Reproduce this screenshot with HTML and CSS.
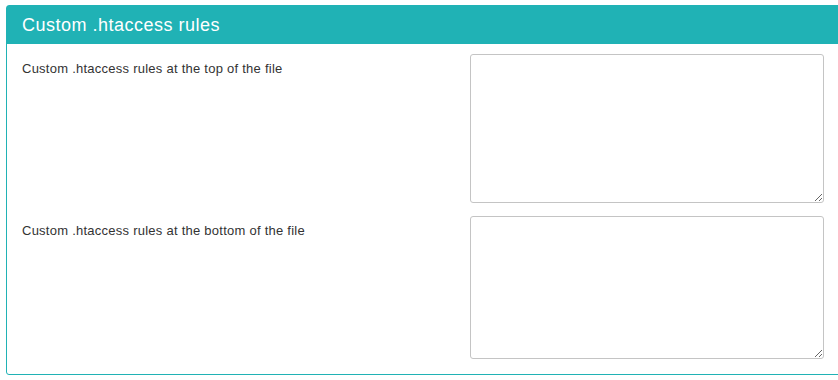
FILE: index.html
```html
<!DOCTYPE html>
<html lang="en">
<head>
    <meta charset="UTF-8">
    <title>Custom .htaccess rules</title>
    <link rel="stylesheet" href="styles.css">
</head>
<body>
    <!-- Panel -->
    <div class="panel">
        <div class="panel-heading">Custom .htaccess rules</div>
        <div class="panel-body">
            <div class="form-row">
                <label class="control-label" for="rules-top">Custom .htaccess rules at the top of the file</label>
                <textarea class="form-control top" id="rules-top"></textarea>
            </div>
            <div class="form-row">
                <label class="control-label" for="rules-bottom">Custom .htaccess rules at the bottom of the file</label>
                <textarea class="form-control bottom" id="rules-bottom"></textarea>
            </div>
        </div>
    </div>
</body>
</html>
```

FILE: styles.css
```css
html, body {
    margin: 0;
    overflow: hidden;
    background-color: white;
}
body {
    padding: 5px 0 0 6px;
    font-family: "Liberation Sans", Arial, sans-serif;
    color: #333;
}
.panel {
    width: 845px;
    border: 1px solid #20b2b5;
    border-radius: 3px;
}
.panel-heading {
    background-color: #20b2b5;
    color: white;
    font-size: 18px;
    line-height: 20px;
    padding: 9px 15px 9px;
    letter-spacing: 0.5px;
}
.panel-body {
    padding: 10px 15px 15px;
}
.form-row {
    display: grid;
    grid-template-columns: 448px 354px;
    margin-bottom: 13px;
}
.form-row:last-child {
    margin-bottom: 0;
}
.control-label {
    font-size: 13px;
    line-height: 16px;
    padding-top: 7px;
    letter-spacing: 0.25px;
}
.form-control {
    box-sizing: border-box;
    width: 354px;
    margin: 0;
    border: 1px solid #c4c4c4;
    border-radius: 3px;
    padding: 6px 12px;
    font-family: "Liberation Sans", Arial, sans-serif;
    font-size: 13px;
    resize: vertical;
}
.form-control.top {
    height: 149px;
}
.form-control.bottom {
    height: 143px;
}
```
